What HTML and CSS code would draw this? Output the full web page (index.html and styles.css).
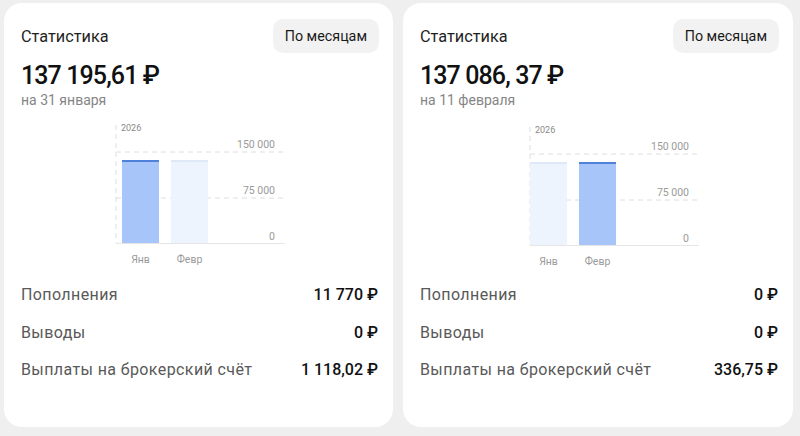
FILE: index.html
```html
<!DOCTYPE html>
<html lang="ru">
<head>
<meta charset="utf-8">
<title>Статистика</title>
<link rel="stylesheet" href="styles.css">
</head>
<body>
<div class="page">
  <section class="card">
    <header class="card-head">
      <h2 class="title">Статистика</h2>
      <button class="period">По месяцам</button>
    </header>
    <div class="amount">137 195,61 ₽</div>
    <div class="date">на 31 января</div>
    <svg class="chart" width="180" height="150" viewBox="0 0 180 150">
      <line class="grid" x1="6" y1="5" x2="6" y2="123"/>
      <text class="year" x="11" y="11">2026</text>
      <line class="grid" x1="6" y1="32" x2="175" y2="32"/>
      <line class="grid" x1="6" y1="78" x2="175" y2="78"/>
      <line class="base" x1="6" y1="123.5" x2="175" y2="123.5"/>
      <text class="axis" x="165" y="28">150 000</text>
      <text class="axis" x="165" y="74">75 000</text>
      <text class="axis" x="165" y="120">0</text>
      <rect class="bar-on" x="12" y="40" width="37" height="83"/>
      <rect class="cap-on" x="12" y="40" width="37" height="2"/>
      <rect class="bar-off" x="61" y="40" width="37" height="83"/>
      <rect class="cap-off" x="61" y="40" width="37" height="2"/>
      <text class="month" x="30.5" y="143">Янв</text>
      <text class="month" x="79.5" y="143">Февр</text>
    </svg>
    <div class="rows">
      <div class="row"><span class="label">Пополнения</span><span class="value">11 770 ₽</span></div>
      <div class="row"><span class="label">Выводы</span><span class="value">0 ₽</span></div>
      <div class="row"><span class="label">Выплаты на брокерский счёт</span><span class="value">1 118,02 ₽</span></div>
    </div>
  </section>
  <section class="card card--second">
    <header class="card-head">
      <h2 class="title">Статистика</h2>
      <button class="period">По месяцам</button>
    </header>
    <div class="amount">137 086, 37 ₽</div>
    <div class="date">на 11 февраля</div>
    <svg class="chart" width="180" height="150" viewBox="0 0 180 150">
      <line class="grid" x1="6" y1="5" x2="6" y2="123"/>
      <text class="year" x="11" y="11">2026</text>
      <line class="grid" x1="6" y1="32" x2="175" y2="32"/>
      <line class="grid" x1="6" y1="78" x2="175" y2="78"/>
      <line class="base" x1="6" y1="123.5" x2="175" y2="123.5"/>
      <text class="axis" x="165" y="28">150 000</text>
      <text class="axis" x="165" y="74">75 000</text>
      <text class="axis" x="165" y="120">0</text>
      <rect class="bar-off" x="6" y="40" width="37" height="83"/>
      <rect class="cap-off" x="6" y="40" width="37" height="2"/>
      <rect class="bar-on" x="55" y="40" width="37" height="83"/>
      <rect class="cap-on" x="55" y="40" width="37" height="2"/>
      <text class="month" x="24.5" y="143">Янв</text>
      <text class="month" x="73.5" y="143">Февр</text>
    </svg>
    <div class="rows">
      <div class="row"><span class="label">Пополнения</span><span class="value">0 ₽</span></div>
      <div class="row"><span class="label">Выводы</span><span class="value">0 ₽</span></div>
      <div class="row"><span class="label">Выплаты на брокерский счёт</span><span class="value">336,75 ₽</span></div>
    </div>
  </section>
</div>
</body>
</html>
```

FILE: styles.css
```css
* { box-sizing: border-box; }
html, body {
  margin: 0;
  padding: 0;
  background: #efefef;
  font-family: Roboto, "Noto Sans", "Liberation Sans", sans-serif;
  color: #1a1a1a;
}
.page {
  display: flex;
  gap: 10px;
  padding: 3px 7px 0 4px;
  width: 800px;
  height: 436px;
}
.card {
  width: 389px;
  height: 424px;
  background: #fff;
  border-radius: 18px;
  padding: 16px 14px 0 17px;
  display: flex;
  flex-direction: column;
}
.card--second { width: 390px; }
.card-head {
  display: flex;
  justify-content: space-between;
  align-items: center;
  height: 34px;
}
.title {
  margin: 0;
  font-size: 16.3px;
  font-weight: 400;
  color: #1f1f1f;
}
.period {
  height: 34px;
  padding: 0 12px;
  border: 0;
  border-radius: 10px;
  background: #f2f2f2;
  font-family: inherit;
  font-size: 14.3px;
  color: #1a1a1a;
}
.amount {
  margin-top: 8px;
  font-size: 25px;
  line-height: 30px;
  font-weight: 500;
  letter-spacing: -0.9px;
  color: #111;
}
.date {
  font-size: 14px;
  line-height: 19px;
  color: #858585;
}
.chart {
  display: block;
  margin: 10px 0 0 89px;
}
.card--second .chart {
  margin: 12px 0 0 104px;
}
.grid {
  stroke: #dedede;
  stroke-width: 1;
  stroke-dasharray: 5 4;
}
.base { stroke: #e6e6e6; stroke-width: 1; }
.year { font-size: 9px; fill: #8a8a8a; }
.axis { font-size: 10.5px; fill: #9a9a9a; text-anchor: end; }
.month { font-size: 10.5px; fill: #9a9a9a; text-anchor: middle; }
.bar-on { fill: #a8c5fa; }
.cap-on { fill: #4f80da; }
.bar-off { fill: #eef4fe; }
.cap-off { fill: #dfe8f8; }
.rows {
  margin-top: 15px;
  display: flex;
  flex-direction: column;
  gap: 17.5px;
}
.card--second .rows { margin-top: 13px; }
.row {
  display: flex;
  justify-content: space-between;
  align-items: baseline;
  font-size: 16px;
  line-height: 20px;
  padding-right: 1px;
}
.label {
  font-size: 16px;
  letter-spacing: 0.4px;
  color: #595959;
}
.value { color: #111; font-weight: 500; }
```
